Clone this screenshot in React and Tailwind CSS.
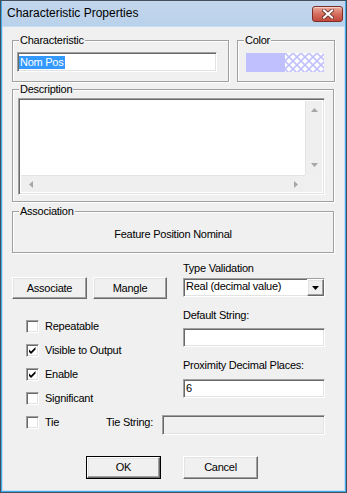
const sunken =
  'border border-t-[#a0a0a0] border-l-[#a0a0a0] border-b-white border-r-white shadow-[inset_1px_1px_0_#696969,inset_-1px_-1px_0_#e3e3e3]'
const raised =
  'border border-t-white border-l-white border-b-[#696969] border-r-[#696969] shadow-[inset_-1px_-1px_0_#a0a0a0,inset_1px_1px_0_#e3e3e3]'

function Group({ label, className, children }) {
  return (
    <div className={`relative border border-[#a0a0a0] shadow-[inset_1px_1px_0_#fff,1px_1px_0_#fff] ${className}`}>
      <span className="absolute -top-[7px] left-[6px] bg-[#f0f0f0] px-px leading-[13px]">{label}</span>
      {children}
    </div>
  )
}

function Button({ children, className, isDefault }) {
  if (isDefault) {
    return (
      <div className={`border border-black ${className}`}>
        <div className={`h-full w-full flex items-center justify-center bg-[#f0f0f0] ${raised}`}>{children}</div>
      </div>
    )
  }
  return (
    <div className={`flex items-center justify-center bg-[#f0f0f0] ${raised} ${className}`}>{children}</div>
  )
}

function Check({ checked }) {
  return (
    <div className={`w-[13px] h-[13px] shrink-0 bg-white ${sunken}`}>
      {checked && (
        <svg width="11" height="11" viewBox="1 1 11 11" className="block">
          <polygon points="3,5.5 5,7.5 9.5,3 9.5,5.5 5,10 3,8" fill="#000" />
        </svg>
      )}
    </div>
  )
}

function CheckRow({ label, checked }) {
  return (
    <div className="h-[24px] flex items-center pl-[14px] gap-[6px]">
      <Check checked={checked} />
      <span className="leading-[13px]">{label}</span>
    </div>
  )
}

function Arrow({ dir }) {
  const pts = {
    up: '0,4 3.5,0 7,4',
    down: '0,0 7,0 3.5,4',
    left: '4,0 4,7 0,3.5',
    right: '0,0 4,3.5 0,7',
  }[dir]
  const vertical = dir === 'up' || dir === 'down'
  return (
    <svg width={vertical ? 7 : 4} height={vertical ? 4 : 7} className="block">
      <polygon points={pts} fill="#a6a6a6" />
    </svg>
  )
}

export default function App() {
  return (
    <div className="w-[347px] h-[493px] border border-[#46505c] bg-[#f0f0f0] text-[11px] tracking-[-0.25px] text-black font-['Liberation_Sans',Arial,sans-serif]">
      <div className="h-full flex flex-col border-x border-b border-[#3cacea]">
        <div className="h-[25px] shrink-0 flex justify-between bg-gradient-to-b from-[#c3d7ee] to-[#b9d1ea] pl-[5px] pr-[2px]">
          <span className="self-center text-[12px] tracking-normal leading-[15px]">Characteristic Properties</span>
          <div className="mt-[5px] w-[31px] h-[16px] rounded-[3px] border border-[#7b2f26] bg-gradient-to-b from-[#e9aa9d] via-[#d46e5e] to-[#c2473a] shadow-[inset_0_1px_0_#f5cfc6] flex items-center justify-center">
            <svg width="12" height="10" viewBox="0 0 12 10">
              <path d="M2 1.5 L10 8.5 M10 1.5 L2 8.5" stroke="#5a1d16" strokeWidth="3.6" strokeLinecap="square" />
              <path d="M2 1.5 L10 8.5 M10 1.5 L2 8.5" stroke="#fff" strokeWidth="2.2" strokeLinecap="square" />
            </svg>
          </div>
        </div>

        <div className="flex-1 border border-[#cadcf1] bg-[#f0f0f0] pl-[9px] pt-[13px]">
          <div className="flex">
            <Group label="Characteristic" className="w-[217px] h-[42px] pl-[4px] pt-[11px]">
              <div className={`w-[200px] h-[20px] bg-white flex items-center pl-px ${sunken}`}>
                <span className="bg-[#3399ff] text-white leading-[13px] px-px">Nom Pos</span>
              </div>
            </Group>
            <Group label="Color" className="ml-[8px] w-[98px] h-[42px] pl-[8px] pt-[12px]">
              <div className="w-[78px] h-[19px] flex">
                <div className="w-[39px] h-full bg-[#c0c0ff]" />
                <svg width="39" height="19" className="block">
                  <defs>
                    <pattern id="hatch" width="8" height="8" patternUnits="userSpaceOnUse">
                      <rect width="8" height="8" fill="#fff" />
                      <path d="M0 0 L8 8 M8 0 L0 8" stroke="#c0c0ff" strokeWidth="1.6" />
                    </pattern>
                  </defs>
                  <rect width="39" height="19" fill="url(#hatch)" />
                </svg>
              </div>
            </Group>
          </div>

          <Group label="Description" className="mt-[7px] w-[322px] h-[113px] pl-[5px] pt-[8px]">
            <div className={`w-[307px] h-[97px] bg-white ${sunken} p-[2px]`}>
              <div className="h-full grid grid-cols-[1fr_17px] grid-rows-[1fr_17px]">
                <div className="bg-white" />
                <div className="bg-[#efefef] border-l border-[#e3e3e3] flex flex-col items-center justify-between pt-[7px] pb-[8px]">
                  <Arrow dir="up" />
                  <Arrow dir="down" />
                </div>
                <div className="bg-[#efefef] border-t border-[#e3e3e3] flex items-center justify-between pl-[8px] pr-[7px]">
                  <Arrow dir="left" />
                  <Arrow dir="right" />
                </div>
                <div className="bg-[#f0f0f0]" />
              </div>
            </div>
          </Group>

          <Group label="Association" className="mt-[9px] w-[322px] h-[42px] pt-[16px] text-center">
            <div className="leading-[13px]">Feature Position Nominal</div>
          </Group>

          <div className="flex">
            <div className="w-[171px]">
              <div className="mt-[24px] flex gap-[6px]">
                <Button className="w-[75px] h-[22px]">Associate</Button>
                <Button className="w-[74px] h-[22px]">Mangle</Button>
              </div>
              <div className="mt-[15px]">
                <CheckRow label="Repeatable" />
                <CheckRow label="Visible to Output" checked />
                <CheckRow label="Enable" checked />
                <CheckRow label="Significant" />
              </div>
            </div>
            <div className="w-[142px] pt-[9px]">
              <div className="leading-[13px]">Type Validation</div>
              <div className={`mt-[3px] h-[19px] bg-white flex ${sunken}`}>
                <span className="flex-1 pl-[2px] leading-[15px]">Real (decimal value)</span>
                <div className={`w-[17px] h-full bg-[#f0f0f0] flex items-center justify-center ${raised}`}>
                  <svg width="7" height="4" className="block">
                    <polygon points="0,0 7,0 3.5,4" fill="#000" />
                  </svg>
                </div>
              </div>
              <div className="mt-[12px] leading-[13px]">Default String:</div>
              <div className={`mt-[6px] h-[19px] bg-white ${sunken}`} />
              <div className="mt-[12px] leading-[13px]">Proximity Decimal Places:</div>
              <div className={`mt-[7px] h-[19px] bg-white flex items-center pl-[2px] ${sunken}`}>
                <span className="leading-[13px]">6</span>
              </div>
            </div>
          </div>

          <div className="h-[25px] flex items-start">
            <div className="w-[94px] pl-[14px] mt-[6px] flex gap-[6px]">
              <Check />
              <span className="leading-[13px]">Tie</span>
            </div>
            <span className="w-[56px] mt-[6px] leading-[13px]">Tie String:</span>
            <div className={`mt-[5px] w-[163px] h-[20px] bg-[#f0f0f0] ${sunken}`} />
          </div>

          <div className="mt-[21px] ml-[74px] flex gap-[22px]">
            <Button isDefault className="w-[75px] h-[23px]">OK</Button>
            <Button className="w-[75px] h-[23px]">Cancel</Button>
          </div>
        </div>
      </div>
    </div>
  )
}
